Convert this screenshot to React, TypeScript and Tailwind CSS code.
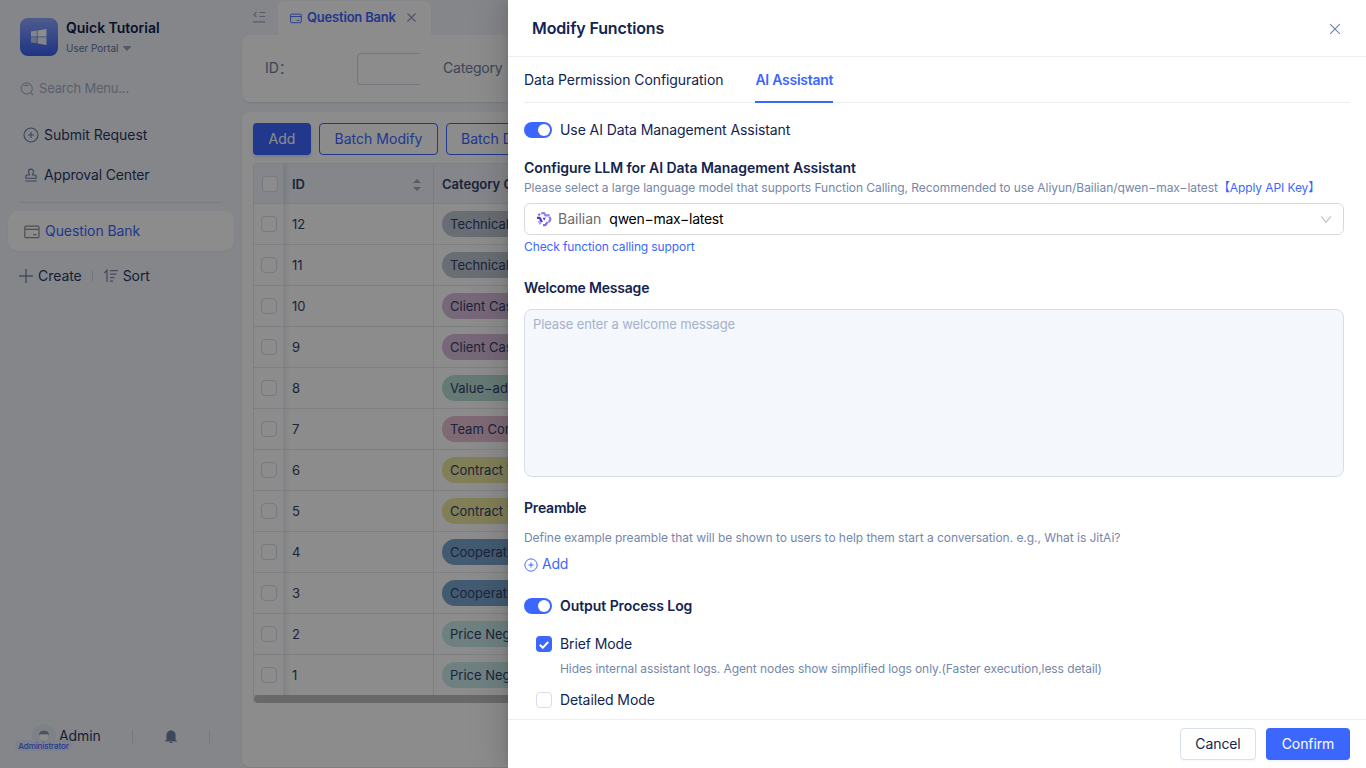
import React from "react";

type Row = { id: string; label: string; tag: string };

const rows: Row[] = [
  { id: "12", label: "Technical", tag: "bg-[#bfc6d4]" },
  { id: "11", label: "Technical", tag: "bg-[#bfc6d4]" },
  { id: "10", label: "Client Cas", tag: "bg-[#d8bddb]" },
  { id: "9", label: "Client Cas", tag: "bg-[#d8bddb]" },
  { id: "8", label: "Value−add", tag: "bg-[#b8dcd5]" },
  { id: "7", label: "Team Con", tag: "bg-[#e6c0d3]" },
  { id: "6", label: "Contract T", tag: "bg-[#eae79e]" },
  { id: "5", label: "Contract T", tag: "bg-[#eae79e]" },
  { id: "4", label: "Cooperati", tag: "bg-[#7aa6cf]" },
  { id: "3", label: "Cooperati", tag: "bg-[#7aa6cf]" },
  { id: "2", label: "Price Neg", tag: "bg-[#c8eaea]" },
  { id: "1", label: "Price Neg", tag: "bg-[#c8eaea]" },
];

function CardIcon({ className }: { className: string }) {
  return (
    <svg className={className} viewBox="0 0 16 14" fill="none" stroke="currentColor" strokeWidth="1.2">
      <rect x="0.8" y="1.2" width="14.2" height="11.4" rx="1.2" />
      <path d="M0.8 4.4h14.2M9.2 9.6h3.2" />
    </svg>
  );
}

function PlusCircle({ className }: { className: string }) {
  return (
    <svg className={className} viewBox="0 0 16 16" fill="none" stroke="currentColor" strokeWidth="1.1">
      <circle cx="8" cy="8" r="7" />
      <path d="M8 5v6M5 8h6" />
    </svg>
  );
}

function Toggle() {
  return (
    <span className="flex h-4 w-7 shrink-0 items-center justify-end rounded-full bg-[#3c67ff] pr-0.5">
      <span className="size-3 rounded-full bg-white" />
    </span>
  );
}

function Sidebar() {
  return (
    <aside className="flex h-full w-[242px] shrink-0 flex-col text-[#2a3a63]">
      <div className="mt-[18px] flex h-[38px] pl-5">
        <div className="flex size-[38px] items-center justify-center rounded-[8px] bg-gradient-to-b from-[#8fa6ff] to-[#3a5ef0]">
          <svg className="size-4" viewBox="0 0 16 16" fill="#fff">
            <path d="M0 2.4l5.8-.9v6H0z" opacity=".9" />
            <path d="M6.600 1.400L15.500 0v7.500H6.600z" />
            <path d="M0 8.200h5.800v6L0 13.400z" opacity=".6" />
            <path d="M6.600 8.200h8.900V16l-8.900-1.600z" opacity=".9" />
          </svg>
        </div>
        <div className="ml-2 flex flex-col">
          <span className="h-5 text-[14px] leading-5 font-semibold tracking-[-0.02px] text-[#0e1f4d]">Quick Tutorial</span>
          <span className="mt-0.5 flex h-4 items-center text-[10px] leading-4 tracking-[-0.02px] text-[#65749a]">
            User Portal
            <svg className="ml-1 h-[5px] w-2" viewBox="0 0 8 5" fill="#98a3bd">
              <path d="M.5 0h7L8 .8 4.600 4.600a.8.8 0 0 1-1.200 0L0 .8z" />
            </svg>
          </span>
        </div>
      </div>
      <div className="mt-[23px] flex h-5 items-center pl-5 text-[13px] text-[#a4aec6]">
        <svg className="mr-[5px] size-[14px]" viewBox="0 0 14 14" fill="none" stroke="currentColor" strokeWidth="1.1">
          <circle cx="6.7" cy="6.500" r="5.6" />
          <path d="M10.700 10.600L13 13M4.400 4.200a3.200 3.200 0 0 1 4.200-.2" />
        </svg>
        <span className="tracking-[-0.2px]">Search Menu...</span>
      </div>
      <div className="mt-[26px] flex h-5 items-center pl-[23px] text-[14px]">
        <PlusCircle className="mr-[5px] size-4 text-[#6b7ca3]" />
        <span className="pb-0.5 tracking-[-0.05px]">Submit Request</span>
      </div>
      <div className="mt-5 flex h-5 items-center pl-[23px] text-[14px]">
        <svg className="mr-[5px] size-4 text-[#6b7ca3]" viewBox="0 0 16 16" fill="none" stroke="currentColor" strokeWidth="1.1">
          <path d="M6.600 8c.1-1-1.100-1.800-1.100-3.400a2.500 2.500 0 0 1 5 0c0 1.600-1.200 2.400-1.100 3.400h2.400a1.400 1.400 0 0 1 1.400 1.400v1.800H2.800V9.400A1.400 1.400 0 0 1 4.200 8zM2.200 14h11.600" />
        </svg>
        <span className="pb-0.5 tracking-[-0.14px]">Approval Center</span>
      </div>
      <div className="mt-[17px] ml-5 h-px w-[202px] bg-[#dde3f0]" />
      <div className="mt-2 ml-2 flex h-10 w-[226px] items-center rounded-[10px] bg-white pl-4 text-[14px] text-[#3c67ff] shadow-[0_1px_2px_rgba(60,80,130,0.08)]">
        <CardIcon className="mt-px mr-[5px] h-[14px] w-4 text-[#8b8f98]" />
        <span className="pb-0.5 tracking-[-0.07px]">Question Bank</span>
      </div>
      <div className="mt-[15px] flex h-5 items-center pl-[19px] text-[14px]">
        <svg className="mr-[5px] size-[14px]" viewBox="0 0 14 14" stroke="#7b8aac" strokeWidth="1.400">
          <path d="M7 0v14M0 7h14" />
        </svg>
        <span className="pb-0.5 tracking-[-0.05px]">Create</span>
        <span className="ml-[10px] h-3 w-px bg-[#d5dbe9]" />
        <svg className="mr-[5px] ml-[11px] h-[14px] w-[14px]" viewBox="0 0 14 14" fill="none" stroke="#7b8aac" strokeWidth="1.300">
          <path d="M0.400 4L3 1.200V13M6 1.700h8M6 5.200h6.500M6 8.700h4.500M6 12.200h3" />
        </svg>
        <span className="pb-0.5 tracking-[-0.1px]">Sort</span>
      </div>
      <div className="relative mt-auto mb-5 flex h-6 items-center pl-8 text-[14px]">
        <span className="flex size-6 items-center justify-center rounded-full bg-[#e6ecf3]">
          <svg className="size-3" viewBox="0 0 12 12">
            <path d="M2 5h8v2.500a4 4 0 0 1-8 0z" fill="#fdfdfd" />
            <path d="M1.200 5.500C.8 2 3 .8 6 .8s5.200 1.200 4.800 4.700L9.800 4.200H2.200z" fill="#8b97ad" />
          </svg>
        </span>
        <span className="ml-[3px] pb-0.5 tracking-[-0.1px]">Admin</span>
        <span className="ml-[31px] h-[13px] w-px bg-[#d5dbe9]" />
        <svg className="ml-8 h-[13px] w-3" viewBox="0 0 12 13" fill="#6f83aa">
          <path d="M6 0c.6 0 1 .3 1 .8C9.400 1.300 10.600 3 10.600 5.200V10.300L12 11v.6H0V11l1.400-.7V5.200C1.400 3 2.600 1.300 5 .8 5 .3 5.400 0 6 0zM4.500 12h3a1.500 1.200 0 0 1-3 0z" />
        </svg>
        <span className="ml-8 h-[13px] w-px bg-[#d5dbe9]" />
        <span className="absolute top-4 left-[15px] flex h-[11px] w-[57px] items-center justify-center rounded-full bg-[#e6ecff] text-[8px] leading-[10px] font-medium tracking-[-0.1px] text-[#3c67ff]">
          Administrator
        </span>
      </div>
    </aside>
  );
}

function Check() {
  return <span className="size-4 rounded-[4px] border border-[#d7dded] bg-white" />;
}

function Workspace() {
  return (
    <main className="flex h-full min-w-0 flex-1 flex-col">
      <div className="flex h-[35px] shrink-0 items-start">
        <svg className="mt-[11px] ml-[11px] h-3 w-3" viewBox="0 0 12 12" fill="none" stroke="#9aa6c2" strokeWidth="1.200">
          <path d="M3.500 1L.8 3.500l2.700 2.500M6.500 1.500H12M6.500 5.500H12M0 10.800h12" />
        </svg>
        <div className="mt-px ml-[13px] flex h-[34px] w-[153px] items-center rounded-t-[6px] bg-white pl-3 text-[13px] text-[#3c67ff]">
          <CardIcon className="h-[11px] w-3" />
          <span className="ml-[5px] font-semibold tracking-[-0.2px]">Question Bank</span>
          <svg className="mb-px ml-[11px] size-[9px]" viewBox="0 0 9 9" stroke="#8f9bb8" strokeWidth="1.100">
            <path d="M.5.5l8 8M8.500.5l-8 8" />
          </svg>
        </div>
      </div>
      <section className="flex h-[67px] shrink-0 items-center rounded-l-[8px] bg-white pl-[23px] text-[14px] text-[#6d7d9e] shadow-[0_1px_2px_rgba(60,80,130,0.12)]">
        <span className="w-[92px] pb-0.5">ID：</span>
        <span className="h-8 w-[63px] rounded-l-[4px] border border-r-0 border-[#d3d9e8]" />
        <span className="ml-[23px] pb-0.5 tracking-[-0.2px] whitespace-nowrap">Category</span>
      </section>
      <section className="mt-[10px] mb-px flex min-h-0 flex-1 flex-col rounded-l-[8px] bg-white pt-[11px] pl-[11px] shadow-[0_1px_2px_rgba(60,80,130,0.12)]">
        <div className="flex h-8 shrink-0 gap-2 text-[14px] text-[#3c67ff]">
          <button className="w-[58px] rounded-[4px] bg-[#3c67ff] pb-0.5 text-white shadow-[0_2px_3px_rgba(60,103,255,0.2)]">Add</button>
          <button className="w-[119px] rounded-[4px] border border-[#3c67ff] pb-0.5 tracking-[0.02px]">Batch Modify</button>
          <button className="w-[119px] rounded-[4px] border border-[#3c67ff] pb-0.5 pl-[14px] text-left tracking-[0.02px]">Batch D</button>
        </div>
        <div className="mt-2 flex flex-col rounded-tl-[4px] border-t border-l border-[#e4e8f1] text-[13px] text-[#33426a]">
          <div className="flex h-10 shrink-0 items-stretch border-b border-[#e4e8f1] bg-[#f0f4fa] font-semibold">
            <div className="flex w-[29px] items-center justify-center pt-px pl-0.5"><Check /></div>
            <div className="w-[7px] bg-gradient-to-r from-[#dde3eb] to-[#f0f4fa]" />
            <div className="flex w-[144px] items-center border-r border-[#e4e8f1] pt-0.5 pr-3 pl-0.5">
              <span className="tracking-[-0.1px]">ID</span>
              <svg className="ml-auto h-3 w-2" viewBox="0 0 8 12" fill="#a3a8b2">
                <path d="M4 0l4 4H0zM4 12l4-4H0z" />
              </svg>
            </div>
            <div className="flex items-center pt-0.5 pl-2 whitespace-nowrap">Category C</div>
          </div>
          {rows.map((r) => (
            <div key={r.id} className="flex h-[41px] shrink-0 items-stretch border-b border-[#e4e8f1]">
              <div className="flex w-[29px] items-center justify-center"><Check /></div>
              <div className="w-[7px] bg-gradient-to-r from-[#e9edf2] to-white" />
              <div className="flex w-[144px] items-center border-r border-[#e4e8f1] pt-px pl-0.5">{r.id}</div>
              <div className="flex items-center pl-2">
                <span className={`flex h-[26px] w-[140px] items-center rounded-full px-2 pt-px whitespace-nowrap ${r.tag}`}>{r.label}</span>
              </div>
            </div>
          ))}
          <div className="-mt-px h-2 w-[700px] rounded-full bg-[#bfbfbf]" />
        </div>
      </section>
    </main>
  );
}

function Drawer() {
  return (
    <div className="flex h-full w-[858px] flex-col bg-white text-[14px] text-[#12244f] shadow-[-6px_0_16px_rgba(0,0,0,0.08),-3px_0_6px_-4px_rgba(0,0,0,0.12),-9px_0_28px_8px_rgba(0,0,0,0.05)]">
      <header className="flex h-[57px] shrink-0 items-center justify-between border-b border-[#eceef4] pr-[26px] pl-6">
        <h1 className="text-[16px] leading-6 font-semibold tracking-[-0.13px]">Modify Functions</h1>
        <svg className="mt-0.5 size-[10px]" viewBox="0 0 10 10" stroke="#6f80a6" strokeWidth="1.100">
          <path d="M0 0l10 10M10 0L0 10" />
        </svg>
      </header>
      <div className="flex min-h-0 flex-1 flex-col overflow-hidden pr-[22px] pl-4">
        <nav className="-mr-[6px] flex h-[46px] shrink-0 gap-8 border-b border-[#eceef4]">
          <div className="flex h-[46px] items-center pb-0.5 tracking-[-0.07px]">Data Permission Configuration</div>
          <div className="flex h-[46px] items-center border-b-2 border-[#3c67ff] font-semibold tracking-[-0.26px] text-[#3c67ff]">AI Assistant</div>
        </nav>
        <div className="mt-[17px] flex h-5 shrink-0 items-center gap-2">
          <Toggle />
          <span className="pb-0.5 tracking-[-0.08px]">Use AI Data Management Assistant</span>
        </div>
        <div className="mt-[18px] h-5 shrink-0 leading-5 font-semibold tracking-[-0.05px]">Configure LLM for AI Data Management Assistant</div>
        <div className="flex h-5 shrink-0 items-center text-[12px] whitespace-nowrap text-[#7587ab]">
          <span className="tracking-[-0.048px]">Please select a large language model that supports Function Calling, Recommended to use Aliyun/Bailian/qwen−max−latest</span>
          <span className="tracking-[-0.1px] text-[#3c67ff]">【Apply API Key】</span>
        </div>
        <div className="mt-[5px] flex h-8 shrink-0 items-center rounded-[6px] border border-[#d9d9d9] pr-3 pl-[11px] text-black">
          <svg className="size-4" viewBox="0 0 16 16" fill="none" strokeWidth="2.2" strokeLinejoin="round">
            <path d="M5.200 2.200h3l1.300 2.200h4.200" stroke="#8d83f3" />
            <path d="M13.300 5.800l1.200 2.400-1.900 3.300" stroke="#8b7ff5" />
            <path d="M11.500 11.200L9.300 14.200H7" stroke="#7a6df0" />
            <path d="M4.600 13.200L2.900 9.700" stroke="#a79ff8" />
            <path d="M1 6.800h2.700l2.200 4.300" stroke="#4b3ad0" />
            <path d="M2.400 4.600L4 2.800" stroke="#8579f2" />
            <path d="M6.600 6.800h3.200L8.200 9.400z" fill="#4b3ad0" />
          </svg>
          <span className="ml-1.5 pb-0.5 text-[#6b6b6b]">Bailian</span>
          <span className="ml-2 pb-0.5 tracking-[-0.27px]">qwen−max−latest</span>
          <svg className="ml-auto h-[7px] w-[10px]" viewBox="0 0 10 7" fill="none" stroke="#bfbfbf" strokeWidth="1.100">
            <path d="M.3.4L5 6.300 9.700.4" />
          </svg>
        </div>
        <div className="mt-0.5 h-5 shrink-0 text-[12px] leading-5 tracking-[-0.11px] text-[#3c67ff]">Check function calling support</div>
        <div className="mt-[21px] h-5 shrink-0 leading-5 font-semibold tracking-[-0.2px]">Welcome Message</div>
        <textarea
          readOnly
          placeholder="Please enter a welcome message"
          className="mt-[11px] h-[168px] w-full shrink-0 resize-none rounded-[8px] border border-[#d6dde9] bg-[#f4f7fc] px-2 py-1 text-[13px] leading-[21px] tracking-[-0.12px] outline-none placeholder:text-[#a7b2ca]"
        />
        <div className="mt-[21px] h-5 shrink-0 leading-5 font-semibold tracking-[-0.2px]">Preamble</div>
        <div className="mt-[10px] h-5 shrink-0 text-[12px] leading-5 tracking-[-0.04px] text-[#7587ab]">
          Define example preamble that will be shown to users to help them start a conversation. e.g., What is JitAi?
        </div>
        <div className="mt-[6px] flex h-5 shrink-0 items-center gap-1 text-[#3c67ff]">
          <PlusCircle className="mt-px size-[14px]" />
          <span className="pb-0.5 tracking-[-0.2px]">Add</span>
        </div>
        <div className="mt-[22px] flex h-5 shrink-0 items-center gap-2 font-semibold">
          <Toggle />
          <span className="pb-0.5 tracking-[-0.06px]">Output Process Log</span>
        </div>
        <div className="mt-[18px] flex h-5 shrink-0 items-center gap-2 pl-3">
          <span className="flex size-4 items-center justify-center rounded-[4px] bg-[#3c67ff]">
            <svg className="mt-px h-2 w-[10px]" viewBox="0 0 10 8" fill="none" stroke="#fff" strokeWidth="2">
              <path d="M.8 3.800l3 2.900L9.200 1" />
            </svg>
          </span>
          <span className="pb-0.5 tracking-[-0.1px]">Brief Mode</span>
        </div>
        <div className="mt-[5px] h-5 shrink-0 pl-9 text-[12px] leading-5 tracking-[-0.078px] text-[#7587ab]">
          Hides internal assistant logs. Agent nodes show simplified logs only.(Faster execution,less detail)
        </div>
        <div className="mt-[11px] flex h-5 shrink-0 items-center gap-2 pl-3">
          <Check />
          <span className="pb-0.5 tracking-[-0.1px]">Detailed Mode</span>
        </div>
      </div>
      <footer className="flex h-[49px] shrink-0 items-start justify-end gap-[10px] border-t border-[#eceef4] pt-2 pr-4">
        <button className="h-8 w-[76px] rounded-[4px] border border-[#d9dfee] bg-white pb-0.5 tracking-[-0.1px] shadow-[0_2px_0_rgba(0,0,0,0.02)]">Cancel</button>
        <button className="h-8 w-[84px] rounded-[4px] bg-[#3c67ff] pb-0.5 tracking-[-0.1px] text-white shadow-[0_2px_0_rgba(60,103,255,0.06)]">Confirm</button>
      </footer>
    </div>
  );
}

export default function App() {
  return (
    <div className="relative h-[768px] w-[1366px] overflow-hidden bg-[#f2f5fc] font-[Inter,'Noto_Sans_CJK_SC',sans-serif]">
      <div className="flex h-full w-full">
        <Sidebar />
        <Workspace />
      </div>
      <div className="absolute inset-0 flex justify-end bg-black/45">
        <Drawer />
      </div>
    </div>
  );
}
